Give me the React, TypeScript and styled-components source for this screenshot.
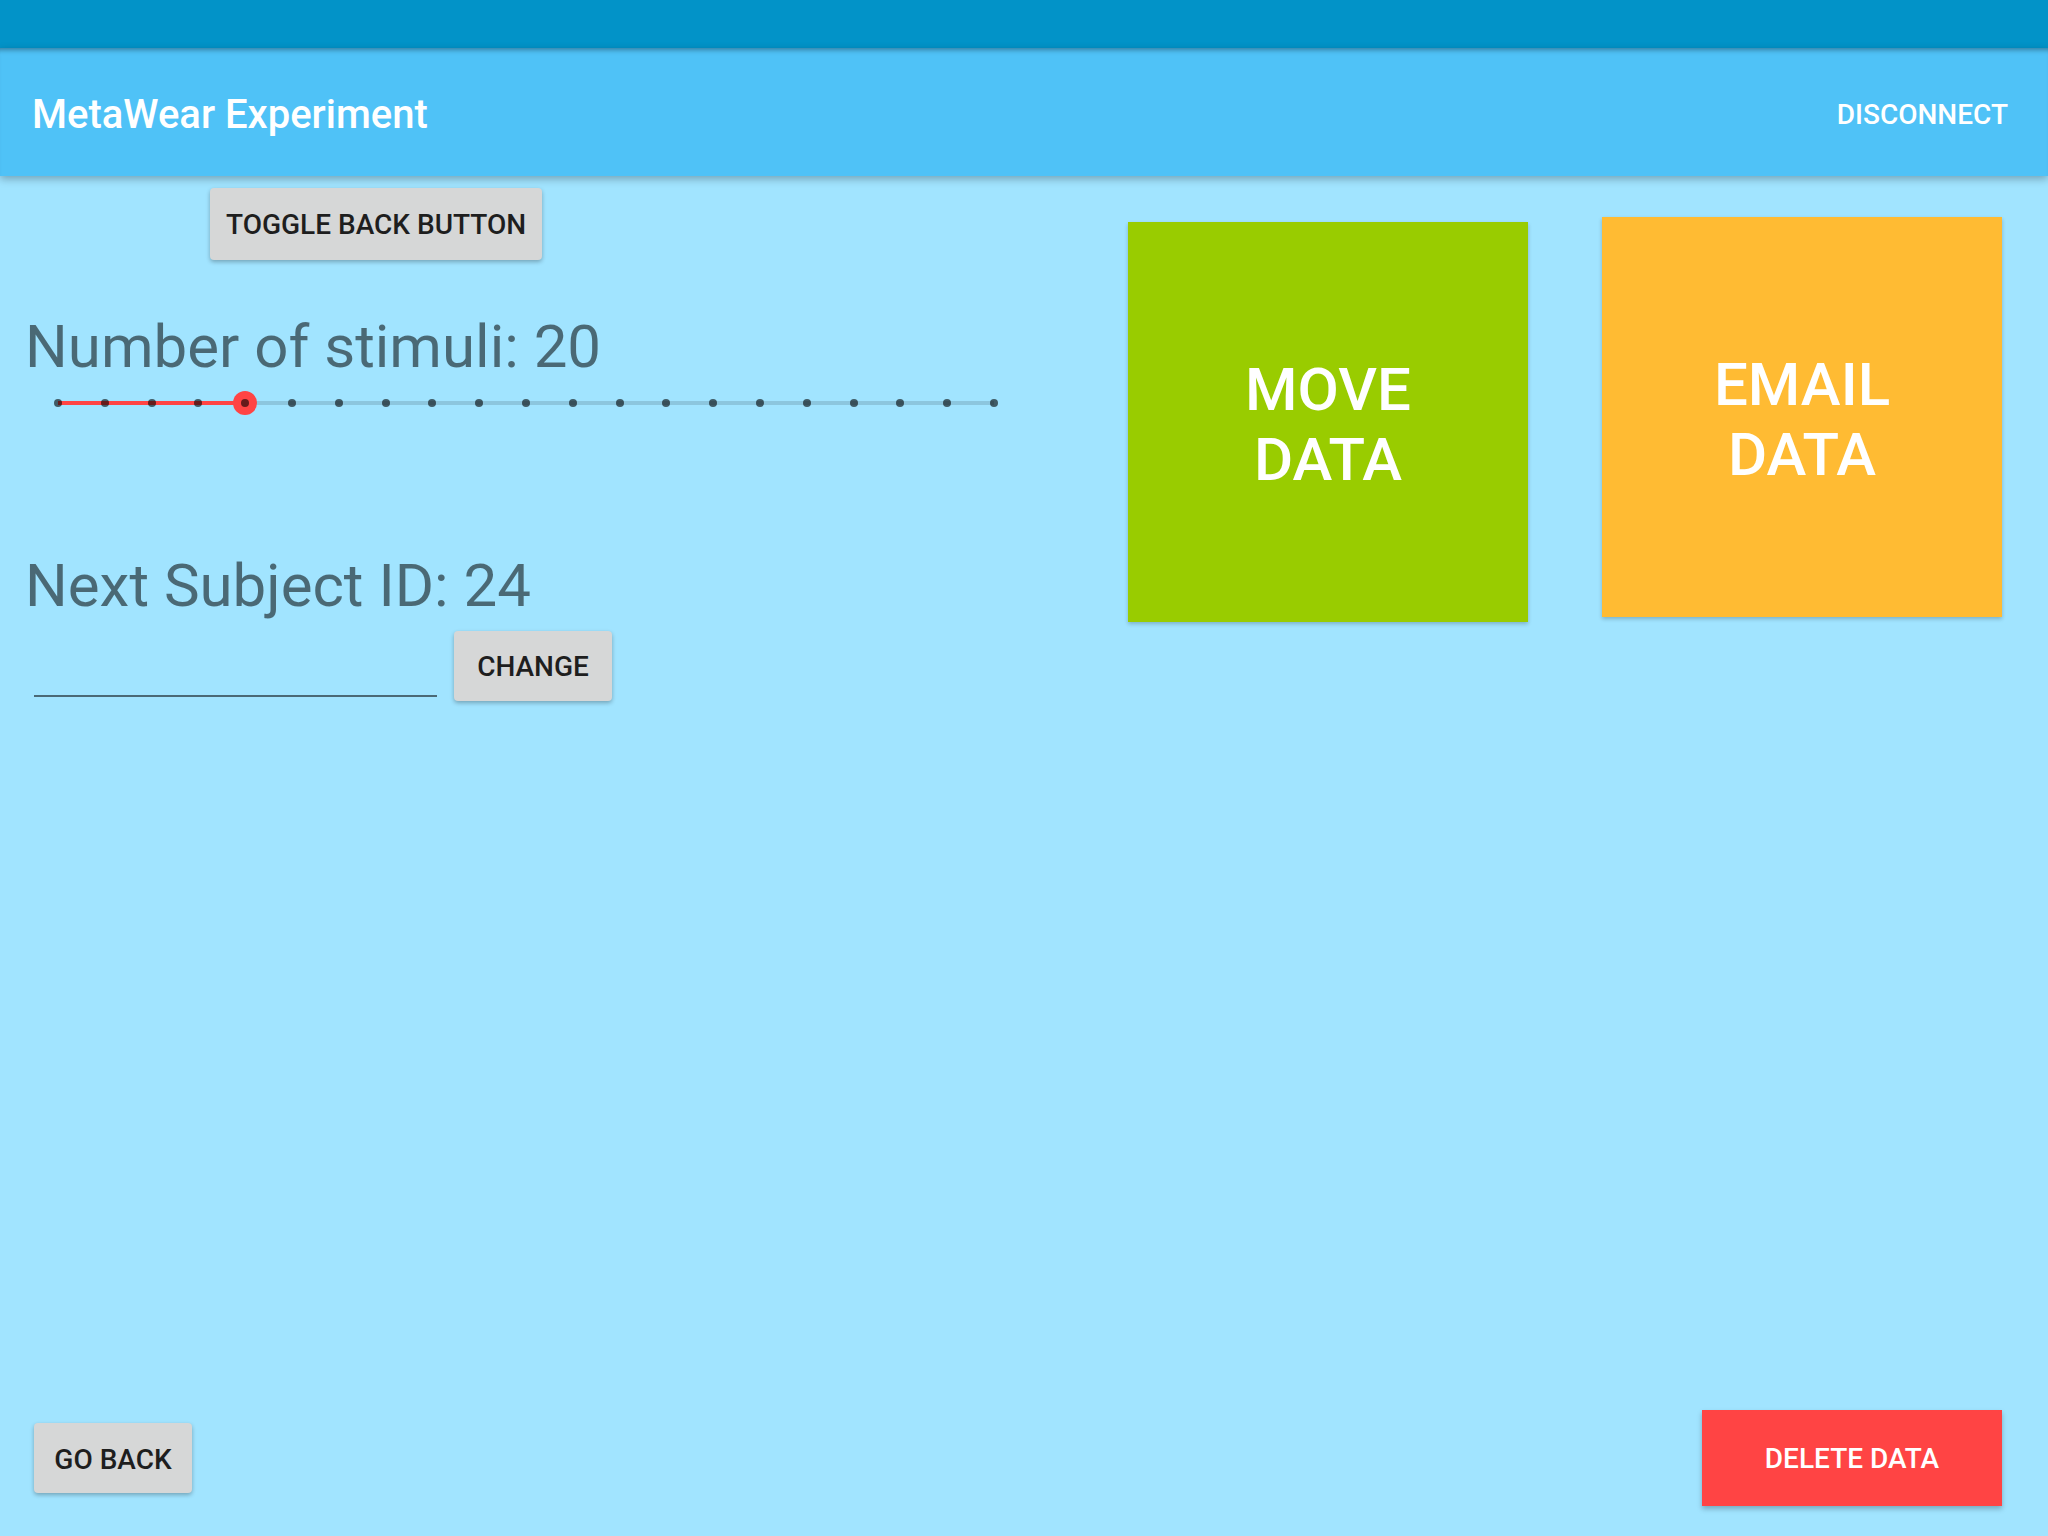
import { FunctionComponent } from 'react'
import styled, { createGlobalStyle } from 'styled-components'

const GlobalStyle = createGlobalStyle`
  html, body {
    margin: 0;
    padding: 0;
    background: #a1e4ff;
  }
  body {
    font-family: Roboto, 'Noto Sans', 'Liberation Sans', sans-serif;
  }
`

const Page = styled.div`
  width: 2048px;
  height: 1536px;
  display: flex;
  flex-direction: column;
  background: #a1e4ff;
  overflow: hidden;
`

const StatusBar = styled.div`
  height: 48px;
  flex-shrink: 0;
  background: #0293c8;
`

const Toolbar = styled.header`
  height: 128px;
  flex-shrink: 0;
  box-sizing: border-box;
  display: flex;
  align-items: center;
  justify-content: space-between;
  padding: 5px 40px 0 32px;
  background: #4fc2f7;
  box-shadow: inset 0 6px 5px -4px rgba(0, 0, 0, 0.35), 0 3px 8px rgba(0, 0, 0, 0.28);
  position: relative;
  z-index: 1;
`

const Title = styled.h1`
  margin: 0;
  font-size: 40px;
  font-weight: 500;
  color: #fff;
`

const MenuAction = styled.span`
  font-size: 28px;
  font-weight: 500;
  color: #fff;
`

const Body = styled.main`
  flex: 1;
  display: flex;
  flex-direction: column;
`

const MainRow = styled.div`
  display: flex;
  align-items: flex-start;
`

const LeftPane = styled.section`
  width: 1128px;
  flex-shrink: 0;
  box-sizing: border-box;
  padding: 12px 0 0 25px;
  display: flex;
  flex-direction: column;
  align-items: flex-start;
`

const FlatButton = styled.button<{ $offset?: number }>`
  height: 72px;
  min-width: 158px;
  padding: 0 16px;
  margin-left: ${props => props.$offset ?? 0}px;
  border: none;
  border-radius: 4px;
  background: #d6d7d7;
  box-shadow: 0 2px 4px rgba(0, 0, 0, 0.28);
  font-family: inherit;
  font-size: 28px;
  font-weight: 500;
  color: #1e1e1e;
`

const Heading = styled.h2<{ $gap: number }>`
  margin: ${props => props.$gap}px 0 0;
  font-size: 60px;
  line-height: 70px;
  font-weight: 400;
  color: rgba(0, 0, 0, 0.54);
`

const Slider = styled.div`
  position: relative;
  margin: 9px 0 0 29px;
  width: 944px;
  height: 24px;
`

const Track = styled.div`
  position: absolute;
  left: 4px;
  right: 4px;
  top: 10px;
  height: 4px;
  background: rgba(0, 0, 0, 0.13);
`

const TrackFill = styled.div`
  position: absolute;
  left: 0;
  top: 0;
  bottom: 0;
  background: #ff4444;
`

const Ticks = styled.div`
  position: absolute;
  inset: 0;
  display: flex;
  justify-content: space-between;
  align-items: center;
`

const Tick = styled.span`
  width: 8px;
  height: 8px;
  border-radius: 50%;
  background: rgba(0, 0, 0, 0.6);
  position: relative;
  z-index: 2;
`

const Thumb = styled.span`
  position: absolute;
  top: 0;
  width: 24px;
  height: 24px;
  margin-left: -12px;
  border-radius: 50%;
  background: #ff4444;
  z-index: 1;
`

const InputRow = styled.div`
  display: flex;
  align-items: flex-start;
  margin-top: 10px;
`

const Field = styled.div`
  width: 403px;
  height: 64px;
  margin-left: 9px;
  margin-right: 17px;
  border-bottom: 2px solid #4a6976;
`

const Tile = styled.button<{ $color: string; $top: number; $gap: number }>`
  width: 400px;
  height: 400px;
  margin: ${props => props.$top}px 0 0 ${props => props.$gap}px;
  padding: 6px 0 0;
  border: none;
  background: ${props => props.$color};
  box-shadow: 0 2px 4px rgba(0, 0, 0, 0.22);
  font-family: inherit;
  font-size: 60px;
  line-height: 70px;
  font-weight: 500;
  color: #fff;
`

const Footer = styled.footer`
  margin-top: auto;
  display: flex;
  justify-content: space-between;
  align-items: flex-end;
  padding: 0 46px 30px 34px;
`

const BackButton = styled(FlatButton)`
  height: 70px;
  margin-bottom: 13px;
  padding-top: 2px;
`

const DangerButton = styled.button`
  width: 300px;
  height: 96px;
  padding-top: 2px;
  border: none;
  background: #ff4444;
  box-shadow: 0 3px 5px rgba(0, 0, 0, 0.25);
  font-family: inherit;
  font-size: 28px;
  font-weight: 500;
  color: #fff;
`

interface IStepSliderProps {
  steps: number
  value: number
}

const StepSlider: FunctionComponent<IStepSliderProps> = ({ steps, value }) => {
  const pct = (value / steps) * 100
  return (
    <Slider aria-label={`step ${value} of ${steps}`}>
      <Track>
        <TrackFill style={{ width: `${pct}%` }} />
      </Track>
      <Thumb style={{ left: `calc(4px + (100% - 8px) * ${value / steps})` }} />
      <Ticks>
        {Array.from({ length: steps + 1 }, (_, i) => (
          <Tick key={i} />
        ))}
      </Ticks>
    </Slider>
  )
}

const App: FunctionComponent = () => (
  <>
    <GlobalStyle />
    <Page>
      <StatusBar />
      <Toolbar>
        <Title>MetaWear Experiment</Title>
        <MenuAction>DISCONNECT</MenuAction>
      </Toolbar>

      <Body>
        <MainRow>
          <LeftPane>
            <FlatButton $offset={185}>TOGGLE BACK BUTTON</FlatButton>
            <Heading $gap={52}>Number of stimuli: 20</Heading>
            <StepSlider steps={20} value={4} />
            <Heading $gap={136}>Next Subject ID: 24</Heading>
            <InputRow>
              <Field />
              <FlatButton style={{ height: 70 }}>CHANGE</FlatButton>
            </InputRow>
          </LeftPane>

          <Tile $color="#99cc00" $top={46} $gap={0}>
            MOVE
            <br />
            DATA
          </Tile>
          <Tile $color="#ffbb33" $top={41} $gap={74}>
            EMAIL
            <br />
            DATA
          </Tile>
        </MainRow>

        <Footer>
          <BackButton>GO BACK</BackButton>
          <DangerButton>DELETE DATA</DangerButton>
        </Footer>
      </Body>
    </Page>
  </>
)

export default App
